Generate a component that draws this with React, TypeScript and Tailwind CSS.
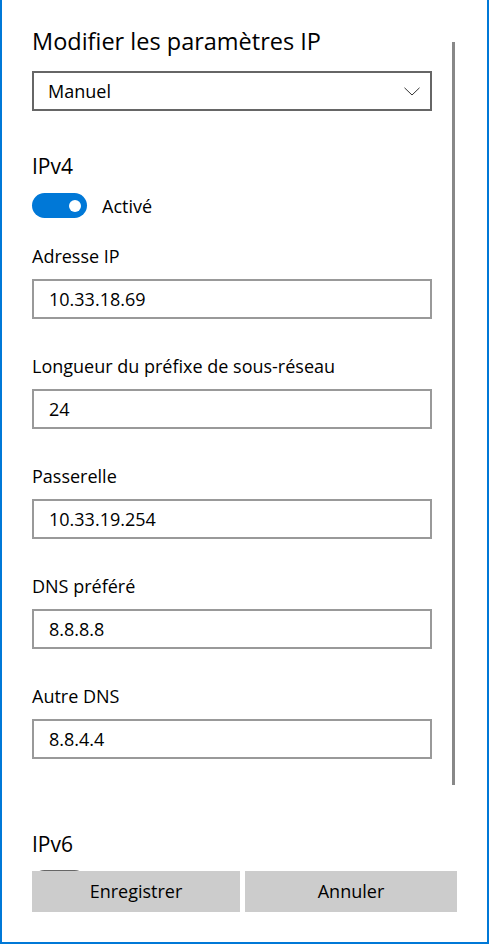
const FIELDS = [
  { label: 'Adresse IP', value: '10.33.18.69' },
  { label: 'Longueur du préfixe de sous-réseau', value: '24' },
  { label: 'Passerelle', value: '10.33.19.254' },
  { label: 'DNS préféré', value: '8.8.8.8' },
  { label: 'Autre DNS', value: '8.8.4.4' },
]

function Chevron() {
  return (
    <svg width="16" height="9" viewBox="0 0 16 9" className="shrink-0">
      <path d="M0.5 0.8 L8 8 L15.5 0.8" fill="none" stroke="#333" strokeWidth="1" />
    </svg>
  )
}

function Field({ label, value, first }: { label: string; value: string; first: boolean }) {
  return (
    <div className={first ? 'mt-[26px]' : 'mt-[35px]'}>
      <p className="h-[24px] text-[18px] leading-[24px] text-black">{label}</p>
      <div className="mt-[11px] flex h-[40px] w-[400px] items-center border-2 border-[#999999] bg-white pl-[15px] text-[18px] leading-[24px] text-black">
        {value}
      </div>
    </div>
  )
}

export default function App() {
  return (
    <div className="flex h-[944px] w-[489px] flex-col border-b-2 border-l-2 border-r-2 border-[#0078d7] bg-white font-['Open_Sans',sans-serif]">
      <div className="flex h-[871px] overflow-hidden pl-[30px]">
        <div className="w-[400px] shrink-0">
          <h1 className="mt-[25px] h-[32px] text-[23.5px] leading-[32px] text-black">Modifier les paramètres IP</h1>

          <div className="mt-[14px] flex h-[40px] w-[400px] items-center justify-between border-2 border-[#666666] pl-[14px] pr-[10px] text-[18px] leading-[24px] text-black">
            <span>Manuel</span>
            <Chevron />
          </div>

          <h2 className="mt-[41px] h-[28px] text-[21px] leading-[28px] text-black">IPv4</h2>

          <div className="mt-[13px] flex items-center">
            <div className="flex h-[25px] w-[55px] items-center justify-end rounded-full bg-[#0078d7] pr-[6px]">
              <div className="h-[12px] w-[12px] rounded-full bg-white" />
            </div>
            <span className="ml-[15px] text-[18px] leading-[24px] text-black">Activé</span>
          </div>

          {FIELDS.map((f, i) => (
            <Field key={f.label} label={f.label} value={f.value} first={i === 0} />
          ))}

          <h2 className="mt-[71px] h-[28px] text-[21px] leading-[28px] text-black">IPv6</h2>
          <div className="mt-[12px] h-[25px] w-[55px] rounded-full border-2 border-[#666666]" />
        </div>

        <div className="ml-[20px] mt-[42px] h-[743px] w-[3px] shrink-0 bg-[#888888]" />
      </div>

      <div className="flex gap-[5px] pl-[30px]">
        <button className="h-[41px] w-[208px] bg-[#cccccc] text-[18px] text-black">Enregistrer</button>
        <button className="h-[41px] w-[212px] bg-[#cccccc] text-[18px] text-black">Annuler</button>
      </div>
    </div>
  )
}
